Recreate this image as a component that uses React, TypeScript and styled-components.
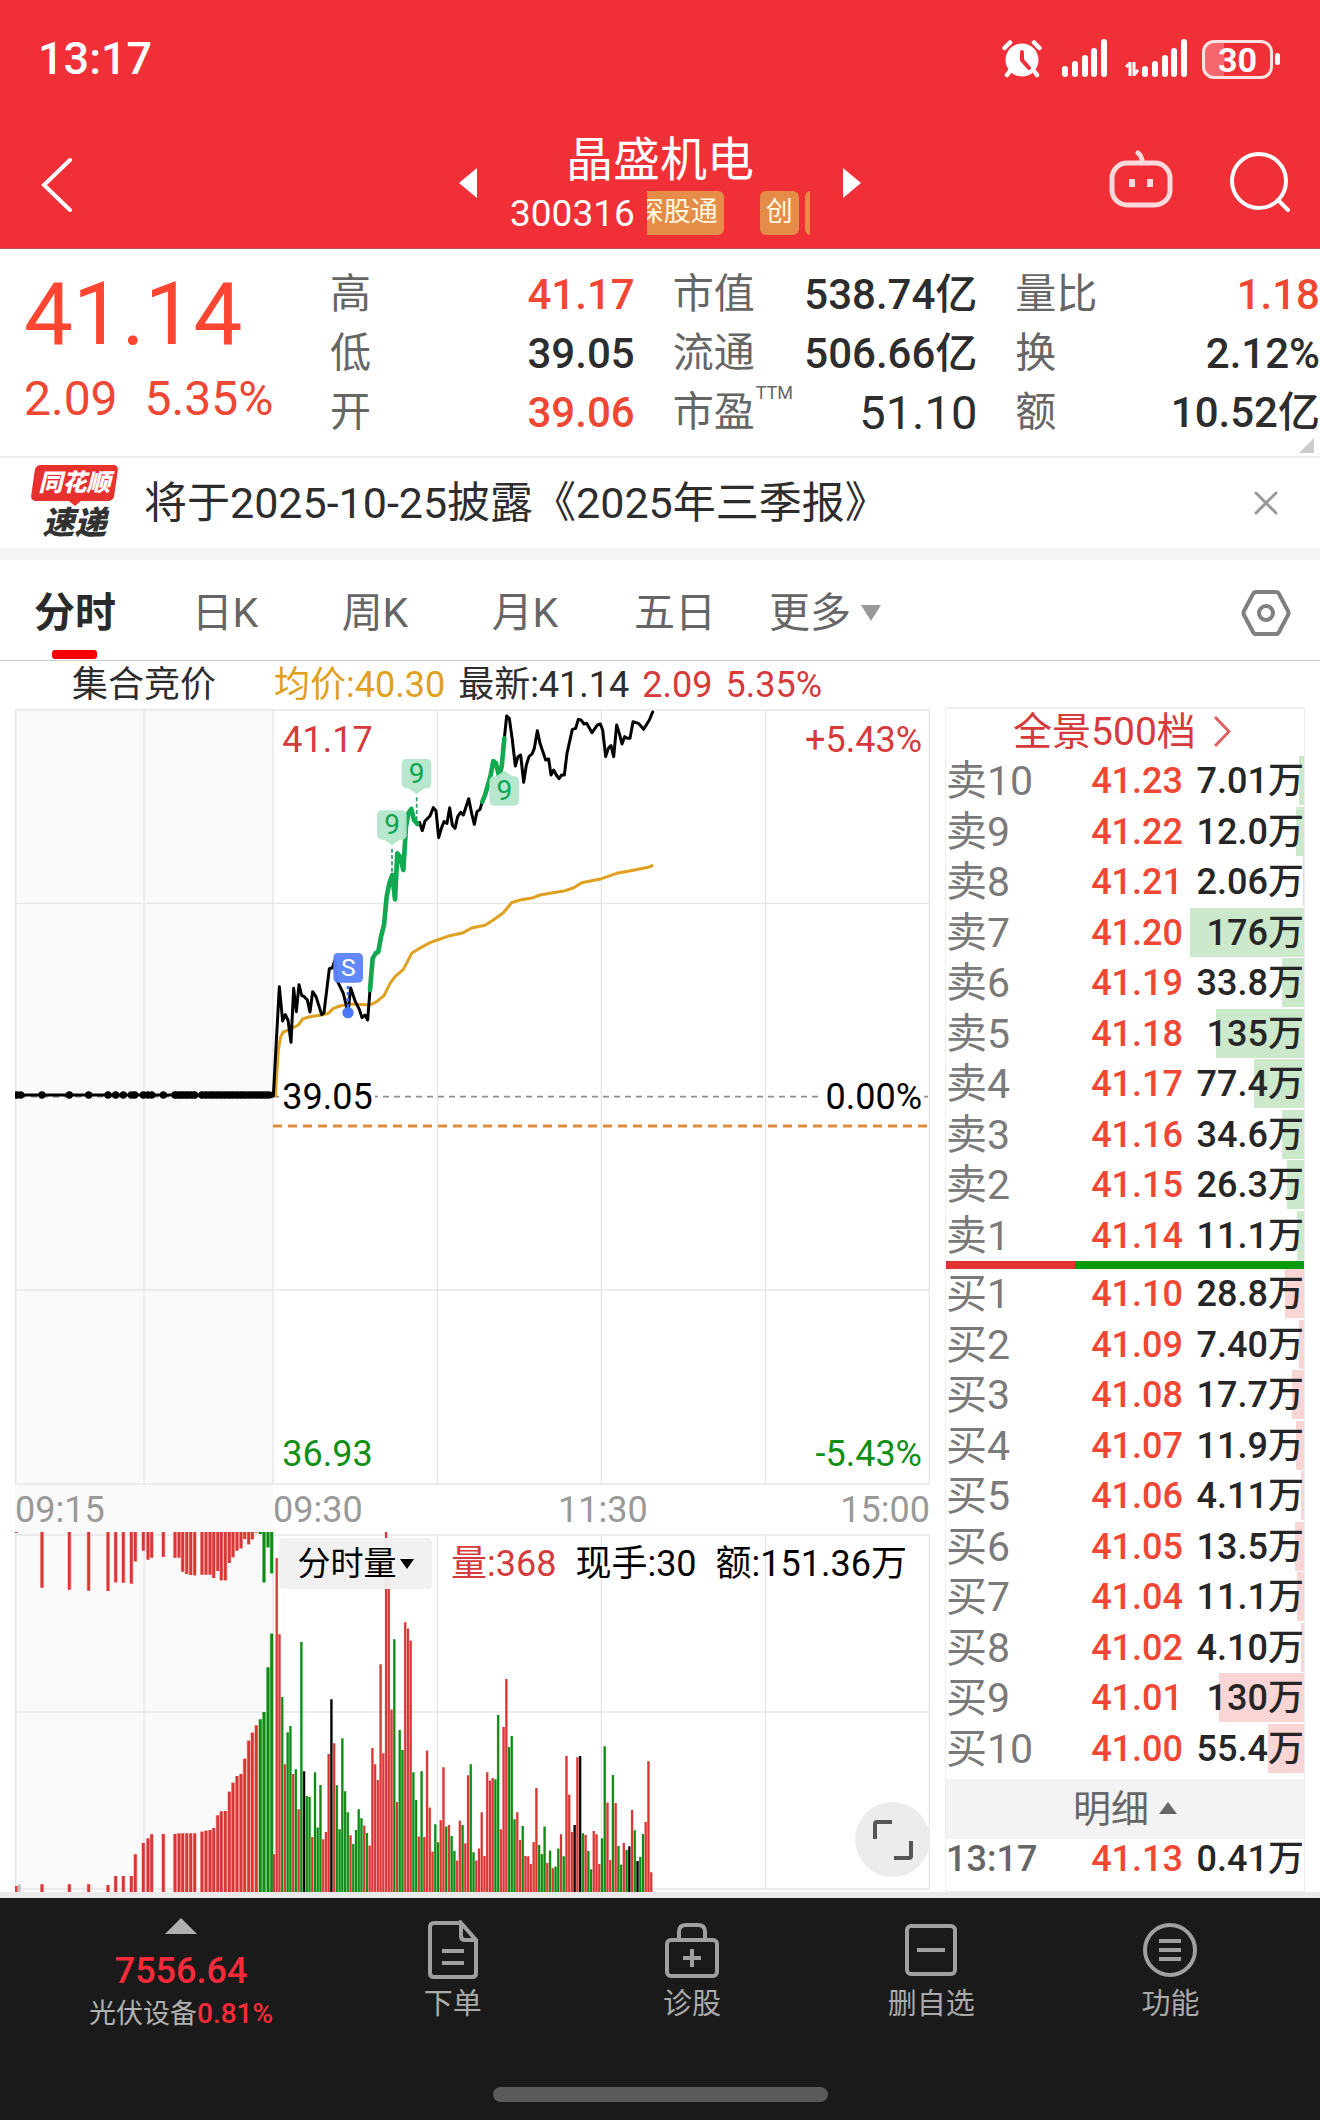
import React from "react";
import styled, { createGlobalStyle } from "styled-components";

const GlobalStyle = createGlobalStyle`
  *, *::before, *::after { box-sizing: border-box; }
  body {
    margin: 0;
    background: #fff;
    color: #2d2d2d;
    font-family: Roboto, "Noto Sans CJK SC", sans-serif;
  }
  h1, p, dl, dd, dt { margin: 0; font-weight: 400; }
  button {
    margin: 0;
    padding: 0;
    border: 0;
    background: none;
    color: inherit;
    font: inherit;
    cursor: pointer;
  }
  svg { display: block; flex: none; }
`;

const RED = "#d63a3a";
const PRICE_RED = "#f04634";
const GREEN = "#0f8f14";

const Page = styled.div`
  display: flex;
  flex-direction: column;
  overflow: hidden;
`;

/* ---------- header ---------- */

const Header = styled.header`
  background: #f12f37;
  color: #fff;
  border-bottom: 1px solid #b5525a;
`;

const StatusBar = styled.div`
  display: flex;
  justify-content: space-between;
  align-items: center;
  height: 118px;
  padding: 0 40px 0 38px;
`;

const Clock = styled.time`
  font-size: 45px;
  line-height: 46px;
  font-weight: 500;
`;

const StatusIcons = styled.div`
  display: flex;
  align-items: center;
  gap: 20px;
`;

const Battery = styled.div`
  display: flex;
  align-items: center;
  gap: 2px;
  margin-left: -6px;
  &::after {
    content: "";
    width: 5px;
    height: 12px;
    border-radius: 3px;
    background: #fff;
  }
`;

const BatteryCell = styled.span`
  display: block;
  width: 71px;
  height: 39px;
  border: 3px solid #ffe3e4;
  border-radius: 12px;
  background: linear-gradient(90deg, #f7666c 30%, transparent 30%);
  font-size: 34px;
  line-height: 34px;
  font-weight: 700;
  text-align: center;
`;

const TopBar = styled.div`
  display: grid;
  grid-template-columns: 1fr auto 1fr;
  align-items: center;
  height: 130px;
  padding: 0 28px;
`;

const BackButton = styled.button`
  justify-self: start;
  padding-left: 12px;
`;

const TopActions = styled.div`
  display: flex;
  align-items: center;
  justify-content: flex-end;
  gap: 54px;
`;

const Switcher = styled.div`
  display: flex;
  align-items: center;
  gap: 33px;
`;

const TitleBlock = styled.div`
  display: flex;
  flex-direction: column;
  width: 300px;
  padding-top: 6px;
`;

const Title = styled.h1`
  font-size: 47px;
  line-height: 54px;
  text-align: center;
`;

const CodeLine = styled.div`
  display: flex;
  align-items: center;
  height: 52px;
  font-size: 37px;
  gap: 12px;
`;

const Marquee = styled.div`
  display: flex;
  flex: 1;
  overflow: hidden;
`;

const Strip = styled.div`
  display: flex;
  margin-left: -16px;
`;

const Badge = styled.span<{ $gap?: number }>`
  flex: none;
  min-width: 39px;
  height: 44px;
  margin-right: ${(p) => p.$gap ?? 6}px;
  padding: 0 6px;
  border-radius: 6px;
  background: #e58d48;
  color: #fff8e2;
  font-size: 27px;
  line-height: 42px;
`;

/* ---------- quote ---------- */

const Quote = styled.section`
  position: relative;
  display: grid;
  grid-template-columns: 292px repeat(3, 1fr);
  column-gap: 38px;
  padding: 16px 0 14px;
  border-bottom: 2px solid #ececec;
  color: ${PRICE_RED};
`;

const LastPrice = styled.div`
  padding-left: 24px;
  white-space: nowrap;
  strong {
    display: block;
    font-size: 87px;
    line-height: 99px;
    font-weight: 400;
    color: #fd4632;
  }
  span {
    margin-right: 27px;
    font-size: 48px;
    line-height: 70px;
  }
`;

const Stats = styled.dl`
  display: flex;
  flex-direction: column;
`;

const Stat = styled.div`
  display: flex;
  justify-content: space-between;
  height: 59px;
  line-height: 59px;
  white-space: nowrap;
`;

const StatName = styled.dt`
  color: #666;
  font-size: 41px;
  sup {
    font-size: 18px;
    line-height: 18px;
    vertical-align: 27px;
    margin-left: 1px;
  }
`;

const StatValue = styled.dd<{ $up?: boolean; $plain?: boolean }>`
  color: ${(p) => (p.$up ? PRICE_RED : "#2d2d2d")};
  font-size: ${(p) => (p.$plain ? 47 : 42)}px;
  font-weight: ${(p) => (p.$plain ? 400 : 500)};
`;

const Corner = styled.i`
  position: absolute;
  right: 6px;
  bottom: 3px;
  border-left: 15px solid transparent;
  border-bottom: 15px solid #ccc;
`;

const Notice = styled.section`
  display: flex;
  align-items: center;
  height: 102px;
  padding: 0 42px 0 30px;
  border-bottom: 12px solid #f4f4f4;
  font-size: 43px;
`;

const Brand = styled.div`
  display: flex;
  flex-direction: column;
  align-items: center;
  width: 89px;
  margin-right: 25px;
  font-weight: 900;
  font-style: italic;
`;

const BrandTop = styled.span`
  position: relative;
  z-index: 0;
  width: 100%;
  font-size: 24px;
  line-height: 36px;
  color: #fff;
  text-align: center;
  &::before {
    content: "";
    position: absolute;
    z-index: -1;
    inset: 0 3px;
    border-radius: 5px;
    background: #e8302f;
    transform: skewX(-8deg);
  }
  &::after {
    content: "";
    position: absolute;
    top: 100%;
    left: 50%;
    margin-left: -6px;
    border: 6px solid transparent;
    border-top: 5px solid #e8302f;
    border-bottom: 0;
  }
`;

const BrandBottom = styled.span`
  padding-top: 4px;
  font-size: 32px;
  line-height: 36px;
  color: #333;
`;

const NoticeText = styled.p`
  flex: 1;
  padding-bottom: 8px;
  white-space: nowrap;
`;

/* ---------- tabs ---------- */

const Tabs = styled.nav`
  display: grid;
  grid-template-columns: repeat(6, 1fr) 2.8fr;
  height: 101px;
  border-bottom: 1px solid #ccc;
`;

const Tab = styled.button<{ $active?: boolean }>`
  position: relative;
  display: flex;
  align-items: center;
  justify-content: center;
  gap: 10px;
  padding-bottom: 2px;
  white-space: nowrap;
  font-size: 41px;
  font-weight: ${(p) => (p.$active ? 700 : 400)};
  color: ${(p) => (p.$active ? "#2a2a2a" : "#666")};
  &::after {
    content: "";
    display: ${(p) => (p.$active ? "block" : "none")};
    position: absolute;
    left: 50%;
    bottom: 1px;
    width: 45px;
    height: 9px;
    margin-left: -23px;
    border-radius: 3px;
    background: #f80000;
  }
`;

const Arrow = styled.i<{ $size: number; $height: number; $up?: boolean }>`
  flex: none;
  border: ${(p) => p.$size}px solid transparent;
  border-width: ${(p) => (p.$up ? `0 ${p.$size}px ${p.$height}px` : `${p.$height}px ${p.$size}px 0`)};
  border-top-color: ${(p) => (p.$up ? "transparent" : "currentColor")};
  border-bottom-color: ${(p) => (p.$up ? "currentColor" : "transparent")};
`;

const MutedArrow = styled(Arrow)`
  margin-top: 8px;
  color: #999;
`;

const SettingsButton = styled.button`
  display: flex;
  align-items: center;
  justify-self: end;
  margin-right: 29px;
  padding-top: 6px;
`;

/* ---------- charts ---------- */

const Main = styled.main`
  display: flex;
  gap: 15px;
  padding: 0 15px;
`;

const ChartColumn = styled.section`
  flex: 1;
  min-width: 0;
`;

const Legend = styled.div`
  display: flex;
  align-items: center;
  height: 47px;
  font-size: 36px;
  line-height: 44px;
  white-space: nowrap;
`;

const AuctionName = styled.span`
  width: 259px;
  padding-left: 57px;
`;

const LegendItem = styled.span<{ $color?: string }>`
  margin-right: 13px;
  color: ${(p) => p.$color ?? "#2d2d2d"};
`;

const Plot = styled.div`
  position: relative;
  > svg { width: 100%; height: auto; }
`;

const Scale = styled.div`
  position: absolute;
  top: 11px;
  right: 6px;
  bottom: 10px;
  left: 29%;
  display: flex;
  flex-direction: column;
  justify-content: space-between;
`;

const ScaleRow = styled.div<{ $color: string }>`
  display: flex;
  justify-content: space-between;
  font-size: 36px;
  line-height: 42px;
  color: ${(p) => p.$color};
  span { padding: 0 2px; background: #fff; }
`;

const TimeAxis = styled.div`
  display: grid;
  grid-template-columns: 258fr 262fr 395fr;
  height: 47px;
  font-size: 36px;
  line-height: 50px;
  color: #999;
  background: linear-gradient(90deg, #fafafa 28.2%, #fff 28.2%);
`;

const LastTimes = styled.span`
  display: flex;
  justify-content: space-between;
  padding-left: 23px;
`;

const VolumeLegend = styled.div`
  position: absolute;
  top: 6px;
  left: 264px;
  display: flex;
  gap: 19px;
  font-size: 36px;
  line-height: 53px;
  color: #000;
  white-space: nowrap;
`;

const VolumeValue = styled.span<{ $up?: boolean }>`
  color: ${(p) => (p.$up ? RED : "#000")};
`;

const VolumeSelect = styled.button`
  display: flex;
  align-items: center;
  justify-content: center;
  gap: 3px;
  width: 153px;
  height: 51px;
  border-radius: 4px;
  background: rgba(240, 240, 240, 0.95);
  font-size: 33px;
  line-height: 50px;
`;

const ExpandButton = styled.button`
  position: absolute;
  right: 0;
  bottom: 15px;
  display: grid;
  place-items: center;
  width: 75px;
  height: 75px;
  border-radius: 50%;
  background: #ececec;
`;

/* ---------- order book ---------- */

const Book = styled.aside`
  display: flex;
  flex-direction: column;
  width: 360px;
  margin-top: 46px;
  border: 1px solid #eee;
  border-top-width: 2px;
`;

const DepthLink = styled.a`
  display: flex;
  align-items: center;
  justify-content: center;
  gap: 18px;
  height: 47px;
  padding: 0 6px 2px 0;
  font-size: 39px;
  line-height: 46px;
  color: ${RED};
  text-decoration: none;
`;

const Levels = styled.table`
  width: 100%;
  height: 505px;
  border-collapse: collapse;
  table-layout: fixed;
  white-space: nowrap;
`;

const LevelName = styled.th`
  width: 120px;
  padding: 0;
  font-size: 41px;
  line-height: 46px;
  font-weight: 400;
  text-align: left;
  color: #7a7a7a;
`;

const LevelPrice = styled.td`
  width: 117px;
  padding: 0;
  font-size: 36px;
  line-height: 46px;
  font-weight: 500;
  text-align: right;
  color: ${PRICE_RED};
`;

const LevelVolume = styled.td<{ $tint: string }>`
  padding: 0;
  font-size: 36px;
  line-height: 46px;
  font-weight: 500;
  text-align: right;
  color: #262626;
  background-image: linear-gradient(${(p) => p.$tint}, ${(p) => p.$tint});
  background-position: right top;
  background-repeat: no-repeat;
`;

const Balance = styled.div`
  height: 8px;
  background: linear-gradient(90deg, #e23232 36%, #079a0b 36%);
`;

const DetailsButton = styled.button`
  display: flex;
  align-items: center;
  justify-content: center;
  gap: 10px;
  height: 60px;
  margin-top: 5px;
  padding-bottom: 8px;
  background: #f3f3f3;
  font-size: 38px;
  color: #666;
  i { margin-top: 6px; }
`;

const Trade = styled.div`
  display: flex;
  height: 48px;
  font-size: 36px;
  line-height: 40px;
  font-weight: 500;
  color: #262626;
  time { width: 120px; color: #666; }
  b { width: 117px; font-weight: 500; text-align: right; color: ${PRICE_RED}; }
  span { flex: 1; text-align: right; }
`;

/* ---------- bottom bar ---------- */

const Footer = styled.footer`
  border-top: 6px solid #e9e9e9;
  background: #1a1a1a;
  color: #aaa;
`;

const FooterNav = styled.nav`
  display: grid;
  grid-template-columns: 1.28fr repeat(4, 1fr);
  height: 189px;
  padding: 0 30px 0 27px;
`;

const Sector = styled.button`
  display: flex;
  flex-direction: column;
  align-items: center;
  padding: 20px 0 0 2px;
  font-size: 27px;
  line-height: 40px;
  color: #b0b0b0;
  strong {
    margin-top: 14px;
    font-size: 36px;
    line-height: 46px;
    font-weight: 500;
    color: #fb2a3b;
  }
  em { font-size: 28px; font-style: normal; font-weight: 500; color: #fb2a3b; }
`;

const FooterItem = styled.button`
  display: flex;
  flex-direction: column;
  align-items: center;
  padding-top: 22px;
  gap: 2px;
  font-size: 29px;
  line-height: 44px;
`;

const HomePill = styled.div`
  width: 335px;
  height: 15px;
  margin: 0 auto 18px;
  border-radius: 8px;
  background: #5a5a5a;
`;

/* ---------- data ---------- */

type Level = [name: string, price: string, volume: string];

const sells: Level[] = [
  ["卖10", "41.23", "7.01"],
  ["卖9", "41.22", "12.0"],
  ["卖8", "41.21", "2.06"],
  ["卖7", "41.20", "176"],
  ["卖6", "41.19", "33.8"],
  ["卖5", "41.18", "135"],
  ["卖4", "41.17", "77.4"],
  ["卖3", "41.16", "34.6"],
  ["卖2", "41.15", "26.3"],
  ["卖1", "41.14", "11.1"],
];

const buys: Level[] = [
  ["买1", "41.10", "28.8"],
  ["买2", "41.09", "7.40"],
  ["买3", "41.08", "17.7"],
  ["买4", "41.07", "11.9"],
  ["买5", "41.06", "4.11"],
  ["买6", "41.05", "13.5"],
  ["买7", "41.04", "11.1"],
  ["买8", "41.02", "4.10"],
  ["买9", "41.01", "130"],
  ["买10", "41.00", "55.4"],
];

const morning =
  "820,1368 838,1040 848,1143 856,1124 864,1140 873,1207 881,1045 889,1115 897,1034 905,1066 913,1070 922,1080 930,1116 938,1055 948,1070 965,1124 972,1118 988,986 997,984 1004,962 1013,1025 1030,1060 1044,1118 1052,1044 1066,1085 1078,1108 1086,1133 1095,1125 1103,1140 1110,1050";
const firstRun =
  "1110,1050 1118,955 1127,940 1135,935 1143,890 1152,855 1160,770 1168,730 1177,705 1185,778 1192,640 1200,650 1210,690 1218,560 1225,520 1234,507 1242,540 1252,552";
const middle =
  "1252,552 1259,548 1267,572 1275,543 1290,528 1300,503 1308,512 1316,593 1324,565 1332,545 1341,550 1349,503 1357,555 1365,565 1373,530 1382,517 1390,525 1406,476 1415,520 1423,553 1431,515 1440,508 1447,485";
const secondRun = "1447,485 1455,465 1464,435 1472,405 1480,363 1488,370 1497,408 1505,380 1513,295";
const latest =
  "1513,295 1520,228 1528,235 1537,300 1546,378 1554,350 1562,345 1571,427 1579,375 1587,350 1596,342 1603,325 1612,272 1620,310 1637,360 1646,357 1653,405 1661,390 1669,405 1677,416 1685,405 1693,405 1701,340 1717,268 1727,265 1735,238 1743,240 1752,252 1760,250 1776,278 1792,255 1801,252 1808,270 1817,350 1825,325 1833,317 1841,350 1850,255 1858,280 1866,312 1874,290 1882,295 1890,295 1899,245 1915,250 1931,268 1948,240 1958,216";
const average =
  "826,1368 835,1230 842,1190 850,1176 866,1170 880,1162 895,1155 908,1137 930,1130 965,1125 985,1120 1000,1105 1020,1098 1050,1092 1110,1095 1130,1085 1152,1067 1170,1030 1185,1010 1210,988 1235,940 1255,927 1290,908 1312,900 1350,887 1390,878 1415,864 1455,856 1480,840 1510,818 1535,788 1560,780 1600,773 1620,765 1650,760 1695,752 1720,744 1745,728 1805,716 1850,700 1900,691 1945,682 1956,677";

const auctionDots = [
  50, 62, 126, 208, 266, 324, 347, 370, 394, 404, 430, 443, 455, 490, 525, 537, 548, 560, 572, 584,
  606, 618, 630, 641, 653, 664, 676, 688, 699, 711, 723, 734, 746, 757, 769, 781, 792, 804,
];

/* x, end of the hanging bar, top of the standing bar */
const auctionBars: [number, number, number][] = [
  [48, 279, 1338], [126, 443, 1333], [208, 449, 1333], [266, 452, 1333], [324, 453, 1335],
  [347, 427, 1308], [370, 428, 1308], [394, 431, 1308], [406, 364, 1243], [430, 332, 1209],
  [444, 359, 1195], [455, 353, 1183], [490, 351, 1182], [525, 353, 1182], [537, 353, 1180],
  [548, 395, 1180], [560, 402, 1180], [572, 405, 1180], [584, 406, 1180], [606, 404, 1175],
  [618, 404, 1172], [630, 404, 1170], [641, 414, 1164], [653, 393, 1126], [664, 421, 1114],
  [676, 421, 1113], [688, 369, 1055], [699, 352, 1028], [711, 332, 1008], [723, 325, 1002],
  [734, 297, 956], [746, 313, 902], [757, 298, 878], [769, 278, 856], [781, 282, 838],
  [792, 427, 816], [804, 322, 682], [815, 400, 581],
];

/* one bar a minute: colour key and top */
const minuteBars =
  "r1243 r354 r583 g771 r973 g877 g858 r1002 g988 r1108 g606 k994 g1068 g1071 r1191 g997 g1163 g1035 r1198 r1176 r942 k778 r910 g1036 g1168 g895 g1054 g1117 r1186 g1212 g1170 g1108 g1135 r1157 g1179 r1217 r924 r973 r1020 r673 r940 r276 r410 r809 g598 r1086 g870 g930 r547 r566 r602 g997 g1080 r1190 g994 r1191 r932 r1103 r1235 g1153 g1207 r1141 r982 g1160 r1155 g1188 g1233 r1262 r1142 g1155 r1210 r1006 g973 g1237 r1262 r1226 r1117 r1248 r997 r1022 r1014 g1018 g825 r1168 r861 r717 g921 g888 g1138 r1117 r1200 g1158 r1248 r1249 r1272 r1206 r1044 g1215 g1242 g1160 r1269 g1232 r1285 g1280 g1226 r1183 g1249 r948 r1064 r1176 k1155 r952 k948 g1180 r1185 g1233 g1288 r1173 r1183 r1272 g1195 g919 r1088 r1260 g1005 r1089 g1218 g1274 r1209 g1230 k1219 r1110 g1171 k1263 g1251 g1182 r1146 r964 r1297"
    .split(" ")
    .map((s) => ({ key: s[0], top: Number(s.slice(1)) }));

const barColor: Record<string, string> = { r: "#d93636", g: "#128a18", k: "#000" };
const haloColor: Record<string, string> = { r: "#f27a76", g: "#4fc254", k: "#555" };

/* ---------- drawings ---------- */

const Marker = ({ x, y, up }: { x: number; y: number; up?: boolean }) => (
  <g>
    <rect x={x - 45} y={y} width="89" height="88" rx="14" fill="#b4e6cc" fillOpacity="0.95" />
    <path
      d={up ? `M${x - 26} ${y + 1}L${x} ${y - 17}L${x + 26} ${y + 1}Z` : `M${x - 26} ${y + 87}L${x} ${y + 105}L${x + 26} ${y + 87}Z`}
      fill="#b4e6cc"
    />
    <text x={x} y={y + 72} fontSize="84" textAnchor="middle" fill="#0da64e">9</text>
  </g>
);

const PriceChart = () => (
  <svg viewBox="45 204 2745 2331" role="img" aria-label="分时走势">
    <rect x="45" y="204" width="774" height="2331" fill="#fafafa" />
    <g stroke="#e6e6e6" strokeWidth="4" fill="none">
      <path d="M45 210H2790M45 790H2790M45 1950H2790M45 2532H2790" />
      <path d="M47 210V2532M432 210V2532M819 210V2532M1312 210V2532M1804 210V2532M2297 210V2532M2788 210V2532" />
    </g>
    <path d="M60 1370H2790" stroke="#8d8d8d" strokeWidth="5" strokeDasharray="18 15" />
    <path d="M819 1458H2790" stroke="#e08b3c" strokeWidth="9" strokeDasharray="27 18" />
    <path d="M45 1365H822" stroke="#000" strokeWidth="9" />
    {auctionDots.map((x) => (
      <circle key={x} cx={x} cy="1365" r="11" />
    ))}
    <path d="M604 1365H818" stroke="#000" strokeWidth="20" />
    <path d="M524 1365H588" stroke="#000" strokeWidth="20" />
    <g fill="none" strokeLinejoin="round" strokeLinecap="round">
      <polyline points={average} stroke="#e0a020" strokeWidth="9" />
      <g stroke="#000" strokeWidth="9">
        <polyline points={morning} />
        <polyline points={middle} />
        <polyline points={latest} />
      </g>
      <g stroke="#10a94f" strokeWidth="14">
        <polyline points={firstRun} />
        <polyline points={secondRun} />
      </g>
    </g>
    <g stroke="#2f9a5c" strokeWidth="5" strokeDasharray="12 7">
      <path d="M1176 626V700M1250 472V545" />
    </g>
    <Marker x={1250} y={357} />
    <Marker x={1176} y={511} />
    <Marker x={1513} y={409} up />
    <path d="M1044 1038V1110" stroke="#3e6cf0" strokeWidth="8" strokeDasharray="10 8" />
    <circle cx="1044" cy="1118" r="17" fill="#4a77f5" />
    <rect x="1000" y="939" width="89" height="89" rx="14" fill="#5b84fb" fillOpacity="0.96" />
    <text x="1045" y="1009" fontSize="74" textAnchor="middle" fill="#fff">S</text>
  </svg>
);

const VolumeChart = () => (
  <svg viewBox="45 276 2745 1080" role="img" aria-label="分时量">
    <rect x="45" y="276" width="774" height="1080" fill="#fafafa" />
    <g stroke="#e6e6e6" strokeWidth="4" fill="none">
      <path d="M45 285H2790M45 816H2790M45 1347H2790" />
      <path d="M47 285V1356M432 285V1356M819 285V1356M1312 285V1347M1804 285V1347M2297 285V1347M2788 285V1347" />
    </g>
    {auctionBars.map(([x, end, top]) => {
      const key = x > 775 ? "g" : "r";
      return (
        <g key={x}>
          <rect x={x - 6} y={276} width="12" height={end - 276} fill={haloColor[key]} fillOpacity="0.6" />
          <rect x={x - 6} y={top} width="12" height={1356 - top} fill={haloColor[key]} fillOpacity="0.6" />
          <rect x={x - 4} y={276} width="8" height={end - 276} fill={barColor[key]} />
          <rect x={x - 4} y={top} width="8" height={1356 - top} fill={barColor[key]} />
        </g>
      );
    })}
    <rect x="54" y="1333" width="8" height="23" fill="#bbb" />
    {minuteBars.map(({ key, top }, i) => {
      const x = 822 + i * 8.2;
      return (
        <g key={i}>
          <rect x={x - 4} y={top} width="8" height={1356 - top} fill={haloColor[key]} fillOpacity="0.7" />
          <rect x={x - 3} y={top} width="6" height={1356 - top} fill={barColor[key]} />
        </g>
      );
    })}
  </svg>
);

const Signal = () => (
  <svg width="46" height="46" viewBox="0 0 46 46" stroke="#fff" strokeWidth="6" strokeLinecap="round">
    <path d="M3 33V38M13 28V38M23 22V38M32 15V38M42 6V38" />
  </svg>
);

const AlarmIcon = () => (
  <svg width="40" height="38" viewBox="0 0 40 38">
    <circle cx="20" cy="20" r="16.5" fill="#fff" />
    <path d="M2.5 8L8 2.5M37.5 8L32 2.5M8 31L5 35M32 31L35 35" stroke="#fff" strokeWidth="4.5" strokeLinecap="round" />
    <path d="M20 12V20L27 28" fill="none" stroke="#f12f37" strokeWidth="4" strokeLinecap="round" />
  </svg>
);

const DataArrows = () => (
  <svg width="14" height="14" viewBox="0 0 14 14" fill="none" stroke="#fff" strokeWidth="3">
    <path d="M1 5L5 1V14M9 0V13L13 8" />
  </svg>
);

const DataSignal = styled.div`
  display: flex;
  align-items: flex-end;
  gap: 3px;
  margin-left: -3px;
  svg:first-child { margin-bottom: 6px; }
`;

const LevelTable = ({ levels, tint, label }: { levels: Level[]; tint: string; label: string }) => (
  <Levels aria-label={label}>
    <tbody>
      {levels.map(([name, price, volume]) => (
        <tr key={name}>
          <LevelName scope="row">{name}</LevelName>
          <LevelPrice>{price}</LevelPrice>
          <LevelVolume $tint={tint} style={{ backgroundSize: `${Math.max(1, Math.round(Number(volume) * 0.65))}px 49px` }}>
            {volume}万
          </LevelVolume>
        </tr>
      ))}
    </tbody>
  </Levels>
);

export default function App() {
  return (
    <Page>
      <GlobalStyle />
      <Header>
        <StatusBar>
          <Clock>13:17</Clock>
          <StatusIcons>
            <AlarmIcon />
            <Signal />
            <DataSignal>
              <DataArrows />
              <Signal />
            </DataSignal>
            <Battery>
              <BatteryCell>30</BatteryCell>
            </Battery>
          </StatusIcons>
        </StatusBar>
        <TopBar>
          <BackButton aria-label="返回">
            <svg width="36" height="58" viewBox="0 0 36 58" fill="none" stroke="#fff" strokeWidth="4" strokeLinecap="round">
              <path d="M30 6L4 31L30 56" />
            </svg>
          </BackButton>
          <Switcher>
            <button aria-label="上一只">
              <svg width="18" height="30" viewBox="0 0 18 30" fill="#fff"><path d="M18 0V30L0 15Z" /></svg>
            </button>
            <TitleBlock>
              <Title>晶盛机电</Title>
              <CodeLine>
                <span>300316</span>
                <Marquee>
                  <Strip>
                    <Badge $gap={36}>深股通</Badge>
                    <Badge>创</Badge>
                    <Badge />
                  </Strip>
                </Marquee>
              </CodeLine>
            </TitleBlock>
            <button aria-label="下一只">
              <svg width="18" height="30" viewBox="0 0 18 30" fill="#fff"><path d="M0 0V30L18 15Z" /></svg>
            </button>
          </Switcher>
          <TopActions>
            <button aria-label="助手">
              <svg width="66" height="68" viewBox="0 0 66 68" fill="none" stroke="#ffd9db" strokeWidth="5" strokeLinecap="round">
                <rect x="4" y="14" width="58" height="42" rx="15" />
                <path d="M34 13C34 8 33 6 30 4" />
                <path d="M24 30V38M42 30V38" strokeWidth="6" strokeLinecap="butt" />
              </svg>
            </button>
            <button aria-label="搜索">
              <svg width="64" height="64" viewBox="0 0 64 64" fill="none" stroke="#fff" strokeWidth="4" strokeLinecap="round">
                <circle cx="31" cy="30" r="27" />
                <path d="M50 49L60 59" />
              </svg>
            </button>
          </TopActions>
        </TopBar>
      </Header>

      <Quote>
        <LastPrice>
          <strong>41.14</strong>
          <span>2.09</span>
          <span>5.35%</span>
        </LastPrice>
        <Stats>
          <Stat><StatName>高</StatName><StatValue $up>41.17</StatValue></Stat>
          <Stat><StatName>低</StatName><StatValue>39.05</StatValue></Stat>
          <Stat><StatName>开</StatName><StatValue $up>39.06</StatValue></Stat>
        </Stats>
        <Stats>
          <Stat><StatName>市值</StatName><StatValue>538.74亿</StatValue></Stat>
          <Stat><StatName>流通</StatName><StatValue>506.66亿</StatValue></Stat>
          <Stat><StatName>市盈<sup>TTM</sup></StatName><StatValue $plain>51.10</StatValue></Stat>
        </Stats>
        <Stats>
          <Stat><StatName>量比</StatName><StatValue $up>1.18</StatValue></Stat>
          <Stat><StatName>换</StatName><StatValue>2.12%</StatValue></Stat>
          <Stat><StatName>额</StatName><StatValue>10.52亿</StatValue></Stat>
        </Stats>
        <Corner />
      </Quote>

      <Notice>
        <Brand>
          <BrandTop>同花顺</BrandTop>
          <BrandBottom>速递</BrandBottom>
        </Brand>
        <NoticeText>将于2025-10-25披露《2025年三季报》</NoticeText>
        <button aria-label="关闭">
          <svg width="24" height="24" viewBox="0 0 24 24" stroke="#999" strokeWidth="3" strokeLinecap="round">
            <path d="M2 2L22 22M22 2L2 22" />
          </svg>
        </button>
      </Notice>

      <Tabs>
        <Tab $active>分时</Tab>
        <Tab>日K</Tab>
        <Tab>周K</Tab>
        <Tab>月K</Tab>
        <Tab>五日</Tab>
        <Tab>更多<MutedArrow $size={10} $height={16} /></Tab>
        <SettingsButton aria-label="设置">
          <svg width="50" height="48" viewBox="0 0 50 48" fill="none" stroke="#808080" strokeWidth="4" strokeLinejoin="round">
            <path d="M15 3H35Q37 3 38 5L47 22Q48 24 47 26L38 43Q37 45 35 45H15Q13 45 12 43L3 26Q2 24 3 22L12 5Q13 3 15 3Z" />
            <circle cx="25" cy="24" r="7" />
          </svg>
        </SettingsButton>
      </Tabs>

      <Main>
        <ChartColumn>
          <Legend>
            <AuctionName>集合竞价</AuctionName>
            <LegendItem $color="#e0a020">均价:40.30</LegendItem>
            <LegendItem>最新:41.14</LegendItem>
            <LegendItem $color={RED}>2.09</LegendItem>
            <LegendItem $color={RED}>5.35%</LegendItem>
          </Legend>
          <Plot>
            <PriceChart />
            <Scale>
              <ScaleRow $color={RED}><span>41.17</span><span>+5.43%</span></ScaleRow>
              <ScaleRow $color="#000"><span>39.05</span><span>0.00%</span></ScaleRow>
              <ScaleRow $color={GREEN}><span>36.93</span><span>-5.43%</span></ScaleRow>
            </Scale>
          </Plot>
          <TimeAxis>
            <span>09:15</span>
            <span>09:30</span>
            <LastTimes><span>11:30</span><span>15:00</span></LastTimes>
          </TimeAxis>
          <Plot>
            <VolumeChart />
            <VolumeLegend>
              <VolumeSelect>分时量<Arrow $size={7} $height={10} /></VolumeSelect>
              <VolumeValue $up>量:368</VolumeValue>
              <VolumeValue>现手:30</VolumeValue>
              <VolumeValue>额:151.36万</VolumeValue>
            </VolumeLegend>
            <ExpandButton aria-label="全屏">
              <svg width="42" height="42" viewBox="0 0 42 42" fill="none" stroke="#555" strokeWidth="4">
                <path d="M3 20V5Q3 3 5 3H20M39 22V37Q39 39 37 39H22" />
              </svg>
            </ExpandButton>
          </Plot>
        </ChartColumn>

        <Book>
          <DepthLink href="#depth">
            全景500档
            <svg width="17" height="31" viewBox="0 0 17 31" fill="none" stroke="#e06060" strokeWidth="3">
              <path d="M1 1L15 15.5L1 30" />
            </svg>
          </DepthLink>
          <LevelTable label="卖盘" levels={sells} tint="#cce9cc" />
          <Balance />
          <LevelTable label="买盘" levels={buys} tint="#f9d5d5" />
          <DetailsButton>明细<Arrow $up $size={9} $height={12} /></DetailsButton>
          <Trade>
            <time>13:17</time>
            <b>41.13</b>
            <span>0.41万</span>
          </Trade>
        </Book>
      </Main>

      <Footer>
        <FooterNav>
          <Sector>
            <Arrow $up $size={16} $height={16} />
            <strong>7556.64</strong>
            <span>光伏设备<em>0.81%</em></span>
          </Sector>
          <FooterItem>
            <svg width="58" height="60" viewBox="0 0 58 60" fill="none" stroke="#a0a0a0" strokeWidth="4">
              <path d="M37 3H10Q6 3 6 7V53Q6 57 10 57H48Q52 57 52 53V20L37 3V16Q37 20 41 20H52M18 31H40M18 43H40" />
            </svg>
            下单
          </FooterItem>
          <FooterItem>
            <svg width="58" height="60" viewBox="0 0 58 60" fill="none" stroke="#a0a0a0" strokeWidth="4">
              <rect x="4" y="20" width="50" height="36" rx="4" />
              <path d="M16 20V12Q16 5 23 5H35Q42 5 42 12V20M29 29V47M20 38H38" />
            </svg>
            诊股
          </FooterItem>
          <FooterItem>
            <svg width="58" height="60" viewBox="0 0 58 60" fill="none" stroke="#a0a0a0" strokeWidth="4">
              <rect x="5" y="6" width="48" height="48" rx="4" />
              <path d="M15 30H43" />
            </svg>
            删自选
          </FooterItem>
          <FooterItem>
            <svg width="58" height="60" viewBox="0 0 58 60" fill="none" stroke="#a0a0a0" strokeWidth="4">
              <circle cx="29" cy="30" r="25" />
              <path d="M18 21H40M18 30H40M18 39H40" />
            </svg>
            功能
          </FooterItem>
        </FooterNav>
        <HomePill />
      </Footer>
    </Page>
  );
}
